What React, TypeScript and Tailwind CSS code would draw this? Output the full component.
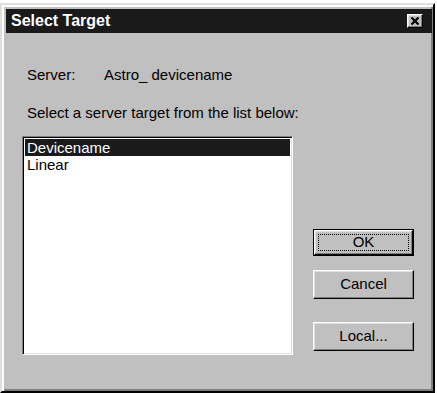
const raised =
  'border-t border-l border-t-white border-l-white border-b border-r border-b-black border-r-black shadow-[inset_-1px_-1px_#808080,inset_1px_1px_#dfdfdf]';

function Button({ label, primary }: { label: string; primary?: boolean }) {
  if (primary) {
    return (
      <button className="w-[101px] h-[27px] border border-black bg-[#c0c0c0] p-0">
        <div className={`h-full w-full ${raised} flex items-center justify-center p-[3px]`}>
          <div className="h-full w-full border border-dotted border-black flex items-center justify-center">
            {label}
          </div>
        </div>
      </button>
    );
  }
  return (
    <button className={`w-[101px] h-[29px] bg-[#c0c0c0] ${raised} flex items-center justify-center`}>
      {label}
    </button>
  );
}

export default function App() {
  return (
    <div className="w-[437px] h-[393px] bg-white pt-[3px] text-[15px] text-black font-['Liberation_Sans',Arial,sans-serif]">
      <div className="w-[435px] h-[390px] bg-[#c0c0c0] border-t-2 border-l-2 border-t-[#dfdfdf] border-l-[#dfdfdf] border-b-2 border-r-2 border-b-black border-r-black shadow-[inset_2px_2px_#fff,inset_-2px_-2px_#808080] pt-[4px] pl-[4px] pr-[1px]">
        {/* title bar */}
        <div className="h-[24px] bg-[#1a1a1a] flex items-center justify-between pl-[5px] pr-[9px]">
          <span className="text-white font-bold text-[16px] leading-none">Select Target</span>
          <button
            className={`w-[16px] h-[14px] bg-[#c0c0c0] ${raised} flex items-center justify-center`}
            aria-label="Close"
          >
            <svg width="10" height="8" viewBox="0 0 10 8">
              <path d="M1.5 0.5 L8.5 7.5 M8.5 0.5 L1.5 7.5" stroke="black" strokeWidth="2.2" />
            </svg>
          </button>
        </div>

        <div className="pl-[16px]">
          <div className="mt-[33px] pl-[5px] leading-[17px] flex">
            <span className="w-[77px]">Server:</span>
            <span>Astro_ devicename</span>
          </div>
          <div className="mt-[21px] pl-[5px] leading-[17px]">Select a server target from the list below:</div>

          <div className="mt-[15px] flex">
            <div className="w-[271px] h-[219px] bg-white border-t border-l border-t-[#808080] border-l-[#808080] border-b border-r border-b-white border-r-white shadow-[inset_1px_1px_#000,inset_-1px_-1px_#dfdfdf] p-[2px]">
              <div className="bg-[#1a1a1a] text-white leading-[17px] px-[2px]">Devicename</div>
              <div className="leading-[17px] px-[2px]">Linear</div>
            </div>
            <div className="ml-[20px] flex flex-col">
              <div className="mt-[93px]">
                <Button label="OK" primary />
              </div>
              <div className="mt-[14px]">
                <Button label="Cancel" />
              </div>
              <div className="mt-[23px]">
                <Button label="Local..." />
              </div>
            </div>
          </div>
        </div>
      </div>
    </div>
  );
}
